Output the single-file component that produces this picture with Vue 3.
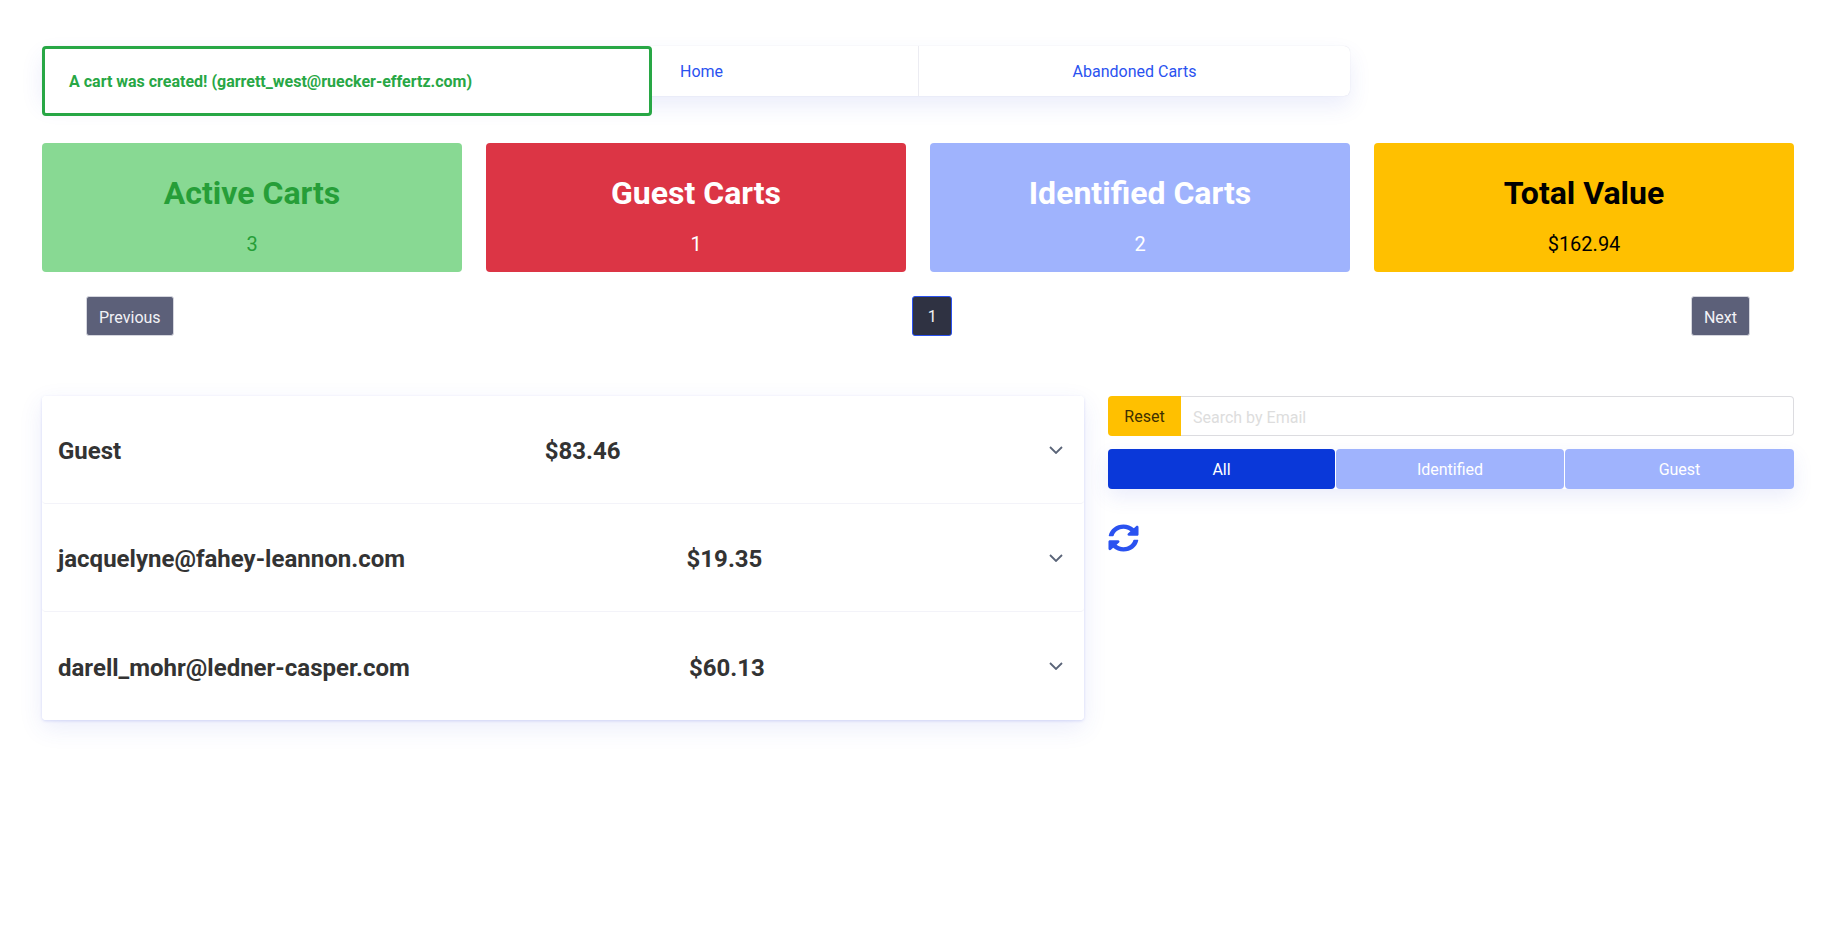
<template>
  <div class="page">
    <div class="alert">A cart was created! (garrett_west@ruecker-effertz.com)</div>

    <nav class="nav">
      <div class="nav-item nav-first"></div>
      <a class="nav-item nav-home" href="#">Home</a>
      <a class="nav-item" href="#">Abandoned Carts</a>
    </nav>

    <div class="stats">
      <div v-for="s in stats" :key="s.title" class="stat" :class="s.cls">
        <h3>{{ s.title }}</h3>
        <p>{{ s.value }}</p>
      </div>
    </div>

    <div class="pager">
      <button class="page-btn">Previous</button>
      <button class="page-btn current">1</button>
      <button class="page-btn">Next</button>
    </div>

    <div class="content">
      <div class="carts">
        <div v-for="c in carts" :key="c.name" class="cart">
          <span class="cart-text">{{ c.name }}</span>
          <span class="cart-text">{{ c.total }}</span>
          <svg class="chevron" viewBox="0 0 14 8" width="14" height="8">
            <path d="M1 1l6 6 6-6" fill="none" stroke="#5a6478" stroke-width="1.8" />
          </svg>
        </div>
      </div>

      <div class="side">
        <div class="search">
          <button class="reset">Reset</button>
          <input class="search-input" placeholder="Search by Email" />
        </div>
        <div class="filters">
          <button v-for="f in filters" :key="f" class="filter" :class="{ active: f === 'All' }">{{ f }}</button>
        </div>
        <svg class="refresh" viewBox="0 0 512 512" width="31" height="28" preserveAspectRatio="none">
          <path fill="#2a52f0" d="M370.72 133.28C339.458 104.008 298.888 87.962 255.848 88c-77.458.068-144.328 53.178-162.791 126.85-1.344 5.363-6.122 9.15-11.651 9.15H24.103c-7.498 0-13.194-6.807-11.807-14.176C33.933 94.924 134.813 8 256 8c66.448 0 126.791 26.136 171.315 68.685L463.03 40.97C478.149 25.851 504 36.559 504 57.941V192c0 13.255-10.745 24-24 24H345.941c-21.382 0-32.09-25.851-16.971-40.971l41.75-41.749zM32 296h134.059c21.382 0 32.09 25.851 16.971 40.971l-41.75 41.75c31.262 29.273 71.835 45.319 114.876 45.28 77.418-.07 144.315-53.144 162.787-126.849 1.344-5.363 6.122-9.15 11.651-9.15h57.304c7.498 0 13.194 6.807 11.807 14.176C478.067 417.076 377.187 504 256 504c-66.448 0-126.791-26.136-171.315-68.685L48.97 471.03C33.851 486.149 8 475.441 8 454.059V320c0-13.255 10.745-24 24-24z" />
        </svg>
      </div>
    </div>
  </div>
</template>

<script setup>
const stats = [
  { title: 'Active Carts', value: '3', cls: 'green' },
  { title: 'Guest Carts', value: '1', cls: 'red' },
  { title: 'Identified Carts', value: '2', cls: 'blue' },
  { title: 'Total Value', value: '$162.94', cls: 'amber' }
]

const carts = [
  { name: 'Guest', total: '$83.46' },
  { name: 'jacquelyne@fahey-leannon.com', total: '$19.35' },
  { name: 'darell_mohr@ledner-casper.com', total: '$60.13' }
]

const filters = ['All', 'Identified', 'Guest']
</script>

<style>
body {
  background: #fff;
}
</style>

<style scoped>
.page {
  position: relative;
  box-sizing: border-box;
  height: 944px;
  padding: 46px 32px 0 42px;
  font-family: Roboto, "Liberation Sans", sans-serif;
  font-size: 16px;
  color: #333;
  overflow: hidden;
}

.alert {
  position: absolute;
  top: 46px;
  left: 42px;
  box-sizing: border-box;
  width: 610px;
  height: 70px;
  display: flex;
  align-items: center;
  padding-left: 24px;
  background: #fff;
  border: 3px solid #28a745;
  border-radius: 4px;
  color: #28a745;
  font-weight: 700;
  font-size: 16px;
  z-index: 2;
}

.nav {
  display: flex;
  width: 1308px;
  height: 50px;
  background: #fff;
  border-radius: 6px;
  box-sizing: border-box;
  box-shadow: 0 0 1px rgba(60, 60, 120, 0.2), 0 10px 22px rgba(60, 80, 220, 0.1);
}

.nav-item {
  width: 431px;
  display: flex;
  align-items: center;
  justify-content: center;
  padding-top: 1px;
  color: #2a52f0;
  text-decoration: none;
  border-left: 1px solid #ececf2;
}

.nav-first {
  flex: 1;
  border-left: none;
}

.nav-home {
  box-sizing: border-box;
  width: 432px;
  padding-right: 2px;
}

.stats {
  display: grid;
  grid-template-columns: repeat(4, 420px);
  gap: 24px;
  margin-top: 47px;
}

.stat {
  height: 129px;
  border-radius: 4px;
  text-align: center;
  box-sizing: border-box;
  padding-top: 31px;
  color: #fff;
}

.stat h3 {
  margin: 0;
  font-size: 32px;
  line-height: 38px;
  font-weight: 700;
}

.stat p {
  margin: 20px 0 0;
  font-size: 20px;
  line-height: 24px;
}

.green {
  background: #88d993;
  color: #269e38;
}

.red {
  background: #dc3545;
}

.blue {
  background: #9fb3fd;
}

.amber {
  background: #ffc000;
  color: #000;
}

.pager {
  display: flex;
  justify-content: space-between;
  padding: 0 44px;
  margin-top: 24px;
  width: 1752px;
  box-sizing: border-box;
}

.page-btn {
  height: 40px;
  padding: 2px 12px 0;
  background: #5c6079;
  border: 1px solid #d5d6de;
  border-radius: 3px;
  color: #f2f2f6;
  font: inherit;
}

.current {
  width: 40px;
  padding: 1px 0 0;
  background: #2f3242;
  border-color: #2a52f0;
}

.content {
  display: flex;
  gap: 24px;
  width: 1752px;
  margin-top: 60px;
}

.carts {
  width: 1042px;
  box-shadow: 0 1px 3px rgba(60, 80, 220, 0.18), 0 8px 24px rgba(60, 80, 220, 0.1);
  border-radius: 4px;
}

.cart {
  height: 108px;
  box-sizing: border-box;
  display: flex;
  align-items: center;
  justify-content: space-between;
  padding: 0 21px 0 16px;
  background: #fff;
  border-radius: 4px;
  border-bottom: 1px solid #f3f3f9;
}

.cart:last-child {
  border-bottom: none;
}

.cart-text {
  padding-top: 3px;
  font-size: 24px;
  font-weight: 700;
}

.chevron {
  display: block;
  margin-left: 5px;
}

.side {
  width: 686px;
}

.search {
  display: flex;
  height: 40px;
}

.reset {
  width: 73px;
  padding-top: 2px;
  background: #ffc000;
  border: none;
  border-radius: 4px 0 0 4px;
  font: inherit;
  color: #403000;
}

.search-input {
  flex: 1;
  box-sizing: border-box;
  padding: 2px 12px 0;
  border: 1px solid #dcdce0;
  border-left: none;
  border-radius: 0 4px 4px 0;
  outline: none;
  font: inherit;
}

.search-input::placeholder {
  color: #ddd;
}

.filters {
  display: grid;
  grid-template-columns: 227px 228px 229px;
  gap: 1px;
  margin-top: 13px;
  box-shadow: 0 8px 20px rgba(60, 80, 220, 0.1);
  border-radius: 4px;
}

.filter {
  height: 40px;
  padding-top: 2px;
  background: #9fb3fd;
  border: none;
  border-radius: 4px;
  color: #fff;
  font: inherit;
}

.filter.active {
  background: #0a38d9;
}

.refresh {
  display: block;
  margin-top: 35px;
}
</style>
